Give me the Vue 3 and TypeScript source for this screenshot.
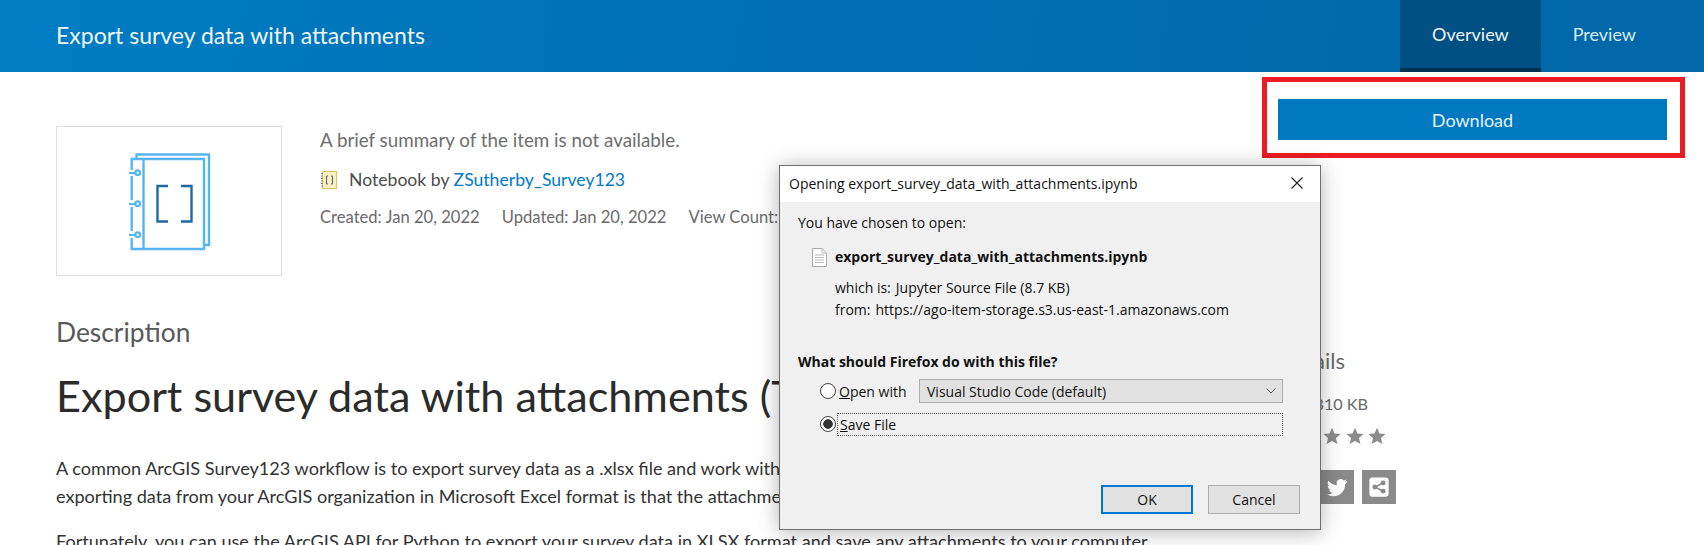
<script setup lang="ts">
const tabs = [
  { label: 'Overview', active: true },
  { label: 'Preview', active: false },
]
const stars = [1, 2, 3, 4, 5]
</script>

<template>
  <div class="page">
    <header class="topbar">
      <div class="topbar-title">Export survey data with attachments</div>
      <nav class="tabs">
        <a v-for="t in tabs" :key="t.label" class="tab" :class="{ active: t.active }">{{ t.label }}</a>
      </nav>
    </header>

    <main class="content">
      <section class="left">
        <div class="hero">
          <div class="thumb">
            <svg class="thumb-svg" viewBox="119 146 100 110" fill="none">
              <path d="M136.500 158V154.500H209V245H204" stroke="#56b4f3" stroke-width="2.400" />
              <path d="M131.700 170V159H204V249H131.700V238M131.700 231V207M131.700 200V176" stroke="#56b4f3" stroke-width="2.400" />
              <path d="M143.500 159V249" stroke="#56b4f3" stroke-width="2.400" />
              <g stroke="#56b4f3" stroke-width="2.200">
                <path d="M129 173H136" /><circle cx="137.700" cy="172.700" r="2.300" />
                <path d="M129 204H136" /><circle cx="137.700" cy="203.700" r="2.300" />
                <path d="M129 235H136" /><circle cx="137.700" cy="234.700" r="2.300" />
              </g>
              <path d="M168 186H157.500V221.500H168M181 186H191.500V221.500H181" stroke="#1e6ba3" stroke-width="2.400" />
            </svg>
          </div>
          <div class="meta">
            <p class="summary">A brief summary of the item is not available.</p>
            <p class="owner">
              <svg class="nb-icon" viewBox="0 0 17 18" fill="none">
                <rect x="2.500" y="0.500" width="14" height="17" fill="#f6efc4" stroke="#d9c464" />
                <path d="M1 2.500H3M1 5H3M1 7.500H3M1 10H3M1 12.500H3M1 15H3" stroke="#8a8a8a" />
                <path d="M8 5H6.500V13H8M11 5H12.500V13H11" stroke="#5f5f5f" />
              </svg>
              <span>Notebook by <a class="link">ZSutherby_Survey123</a></span>
            </p>
            <p class="dates">
              <span>Created: Jan 20, 2022</span>
              <span>Updated: Jan 20, 2022</span>
              <span>View Count: 1,024</span>
            </p>
          </div>
        </div>
        <h2 class="section-title">Description</h2>
        <h1 class="doc-title">Export survey data with attachments (Tutorial)</h1>
        <p class="para">A common ArcGIS Survey123 workflow is to export survey data as a .xlsx file and work with it in Excel.<br />exporting data from your ArcGIS organization in Microsoft Excel format is that the attachments are not included.</p>
        <p class="para">Fortunately, you can use the ArcGIS API for Python to export your survey data in XLSX format and save any attachments to your computer.</p>
      </section>

      <aside class="side">
        <button class="download">Download</button>
        <h3 class="details">Details</h3>
        <p class="size">Size: 810 KB</p>
        <div class="stars">
          <svg v-for="s in stars" :key="s" class="star" viewBox="0 0 24 24"><path fill="#8c8c8c" d="M12 1l3.300 7.500 8.200.8-6.200 5.400 1.900 8.100L12 18.500l-7.200 4.300 1.900-8.100L.5 9.300l8.200-.8z" /></svg>
        </div>
        <div class="shares">
          <span class="tile">
            <svg viewBox="0 0 24 24" class="tile-svg"><path fill="#fff" d="M14 8h3V4h-3c-3 0-5 2-5 5v2H7v4h2v7h4v-7h3l1-4h-4V9c0-.6.4-1 1-1z" /></svg>
          </span>
          <span class="tile">
            <svg viewBox="0 0 24 24" class="tile-svg"><path fill="#fff" d="M23 5.500c-.8.400-1.700.600-2.600.700.900-.600 1.600-1.400 2-2.500-.900.500-1.800.900-2.900 1.100A4.500 4.500 0 0 0 11.800 9c0 .4 0 .7.100 1C8.100 9.800 4.800 8 2.500 5.200c-.4.700-.6 1.400-.6 2.300 0 1.600.8 3 2 3.800-.7 0-1.400-.2-2-.6v.1c0 2.200 1.600 4 3.600 4.400-.7.200-1.400.2-2 .1.600 1.800 2.300 3.100 4.200 3.100A9 9 0 0 1 1 20.200 12.800 12.800 0 0 0 8 22.200c8.300 0 12.900-6.900 12.900-12.900v-.6c.9-.6 1.600-1.400 2.100-2.200z" /></svg>
          </span>
          <span class="tile">
            <svg viewBox="0 0 24 24" class="tile-svg">
              <rect x="1.500" y="1.500" width="21" height="21" rx="3.500" fill="#fff" />
              <path d="M16 7.500L8 12l8 4.500" stroke="#8a8a8a" stroke-width="1.800" fill="none" />
              <circle cx="16.500" cy="7.500" r="2.700" fill="#8a8a8a" />
              <circle cx="7.500" cy="12" r="2.700" fill="#8a8a8a" />
              <circle cx="16.500" cy="16.500" r="2.700" fill="#8a8a8a" />
            </svg>
          </span>
        </div>
      </aside>
    </main>

    <div class="highlight"></div>

    <div class="dialog">
      <div class="dlg-title">
        <span>Opening export_survey_data_with_attachments.ipynb</span>
        <svg class="dlg-close" viewBox="0 0 12 12"><path d="M.5.500l11 11M11.500.500l-11 11" stroke="#222" stroke-width="1.100" fill="none" /></svg>
      </div>
      <div class="dlg-body">
        <div class="dlg-line">You have chosen to open:</div>
        <div class="file-row">
          <svg class="file-icon" viewBox="0 0 15 19" fill="none">
            <path d="M.5.500H10L14.500 5V18.500H.5Z" fill="#fff" stroke="#a8a8a8" />
            <path d="M10 .5V5H14.500M3 7H12M3 9.500H12M3 12H12M3 14.500H12" stroke="#b8b8b8" />
          </svg>
          <strong>export_survey_data_with_attachments.ipynb</strong>
        </div>
        <div class="file-info">
          <div class="info-row"><span>which is:</span><span>Jupyter Source File (8.7 KB)</span></div>
          <div class="info-row"><span>from:</span><span>https://ago-item-storage.s3.us-east-1.amazonaws.com</span></div>
        </div>
        <div class="dlg-question">What should Firefox do with this file?</div>
        <div class="choices">
          <div class="choice">
            <span class="radio"></span>
            <span class="radio-label"><u>O</u>pen with</span>
            <span class="select">
              <span>Visual Studio Code (default)</span>
              <svg class="chev" viewBox="0 0 10 6"><path d="M.5.500L5 5 9.500.500" stroke="#555" fill="none" /></svg>
            </span>
          </div>
          <div class="choice save">
            <span class="radio on"></span>
            <span class="focus-box"><u>S</u>ave File</span>
          </div>
        </div>
        <div class="dlg-actions">
          <button class="dlg-btn primary">OK</button>
          <button class="dlg-btn">Cancel</button>
        </div>
      </div>
    </div>
  </div>
</template>

<style>
html, body { margin: 0; background: #fff; overflow: hidden; }
</style>

<style scoped>
.page {
  position: relative;
  width: 1704px;
  height: 545px;
  overflow: hidden;
  background: #fff;
  font-family: Lato, "Open Sans", sans-serif;
  color: #323232;
}
.topbar {
  height: 72px;
  display: flex;
  align-items: stretch;
  justify-content: space-between;
  padding: 0 36px 0 56px;
  background: linear-gradient(100deg, #007dc4 0%, #0071b5 40%, #0067a8 100%);
  color: #fff;
}
.topbar-title { font-size: 23px; line-height: 70px; font-weight: 400; color: #eef6fb; }
.tabs { display: flex; }
.tab {
  display: flex;
  align-items: center;
  box-sizing: border-box;
  height: 72px;
  font-size: 18px;
  color: #d9ecf8;
  padding: 0 32px 4px;
}
.tab.active { background: #005083; border-bottom: 4px solid #00304f; color: #eef6fb; padding-bottom: 0; }
.content {
  display: grid;
  grid-template-columns: 1222px 389px;
  padding-left: 56px;
}
.left { padding-top: 54px; min-width: 0; }
.hero { display: flex; gap: 38px; }
.thumb {
  box-sizing: border-box;
  width: 226px;
  height: 150px;
  border: 1px solid #dedede;
  display: flex;
  align-items: center;
  justify-content: center;
}
.thumb-svg { width: 100px; height: 110px; }
.meta p { margin: 0; }
.summary { font-size: 18.800px; line-height: 28px; color: #6e6e6e; }
.owner { display: flex; align-items: center; gap: 12px; font-size: 17.600px; line-height: 28px; margin-top: 12px !important; color: #4c4c4c; }
.nb-icon { width: 17px; height: 18px; }
.link { color: #007ac2; }
.dates { display: flex; gap: 22px; font-size: 16.600px; line-height: 24px; margin-top: 11px !important; color: #6a6a6a; }
.section-title { margin: 41px 0 0; font-size: 26.400px; line-height: 30px; font-weight: 400; color: #595959; }
.doc-title { margin: 23px 0 0; font-size: 43.200px; line-height: 50px; font-weight: 400; color: #2b2b2b; white-space: nowrap; }
.para { margin: 34px 0 0; font-size: 18.100px; line-height: 28px; color: #323232; white-space: nowrap; }
.para + .para { margin-top: 17px; }
.side { padding-top: 27px; }
.download {
  display: block;
  width: 389px;
  height: 41px;
  border: 0;
  background: #0079c1;
  color: #e6f2fa;
  font: 400 18px Lato, sans-serif;
}
.details { margin: 206px 0 0; font-size: 22px; line-height: 30px; font-weight: 400; color: #6a6a6a; }
.size { margin: 18px 0 0; font-size: 16.200px; line-height: 20px; color: #6a6a6a; }
.stars { margin-top: 13px; display: flex; gap: 4.500px; }
.star { width: 18px; height: 18px; flex: none; }
.shares { margin-top: 25px; display: flex; gap: 8px; }
.tile { width: 34px; height: 34px; background: #8a8a8a; display: flex; align-items: center; justify-content: center; }
.tile-svg { width: 22px; height: 22px; }
.highlight {
  position: absolute;
  left: 1262px;
  top: 77px;
  width: 423px;
  height: 81px;
  box-sizing: border-box;
  border: 5px solid #ed1c24;
}
.dialog {
  position: absolute;
  left: 779px;
  top: 165px;
  width: 542px;
  height: 365px;
  box-sizing: border-box;
  border: 1px solid #6f6f6f;
  background: #f0f0f0;
  box-shadow: 0 2px 20px rgba(0, 0, 0, 0.3);
  display: flex;
  flex-direction: column;
  font-family: "Open Sans", sans-serif;
  font-size: 14px;
  color: #111;
}
.dlg-title {
  height: 36px;
  flex: none;
  background: #fff;
  display: flex;
  align-items: center;
  justify-content: space-between;
  padding: 0 17px 2px 9px;
  box-sizing: border-box;
}
.dlg-close { width: 12px; height: 12px; }
.dlg-body { flex: 1; display: flex; flex-direction: column; padding: 11px 20px 15px 18px; }
.dlg-line { line-height: 20px; }
.file-row { display: flex; align-items: center; gap: 8px; margin-top: 14px; padding-left: 14px; line-height: 20px; }
.file-icon { width: 15px; height: 19px; }
.file-info { padding-left: 37px; margin-top: 10px; line-height: 22px; }
.info-row { display: flex; gap: 5px; }
.dlg-question { font-weight: 700; margin-top: 31px; line-height: 20px; }
.choices { padding: 0 17px 0 22px; margin-top: 7px; }
.choice { display: flex; align-items: center; height: 24px; }
.choice.save { margin-top: 9px; }
.radio {
  box-sizing: border-box;
  width: 16px;
  height: 16px;
  border: 1px solid #444;
  border-radius: 50%;
  background: #fff;
  flex: none;
  margin-right: 3px;
}
.radio.on { background: radial-gradient(circle, #333 0 4.500px, #fff 5px); }
.radio-label { width: 80px; flex: none; }
.select {
  flex: 1;
  box-sizing: border-box;
  height: 24px;
  background: #e1e1e1;
  border: 1px solid #adadad;
  display: flex;
  align-items: center;
  justify-content: space-between;
  padding: 0 6px 0 7px;
}
.chev { width: 10px; height: 6px; }
.focus-box { flex: 1; border: 1px dotted #666; line-height: 21px; padding-left: 2px; margin-left: -2px; }
.dlg-actions { margin-top: auto; display: flex; justify-content: flex-end; gap: 15px; }
.dlg-btn {
  width: 92px;
  height: 29px;
  box-sizing: border-box;
  background: #e1e1e1;
  border: 1px solid #adadad;
  font: 14px "Open Sans", sans-serif;
  color: #111;
}
.dlg-btn.primary { border: 2px solid #0078d7; }
</style>
